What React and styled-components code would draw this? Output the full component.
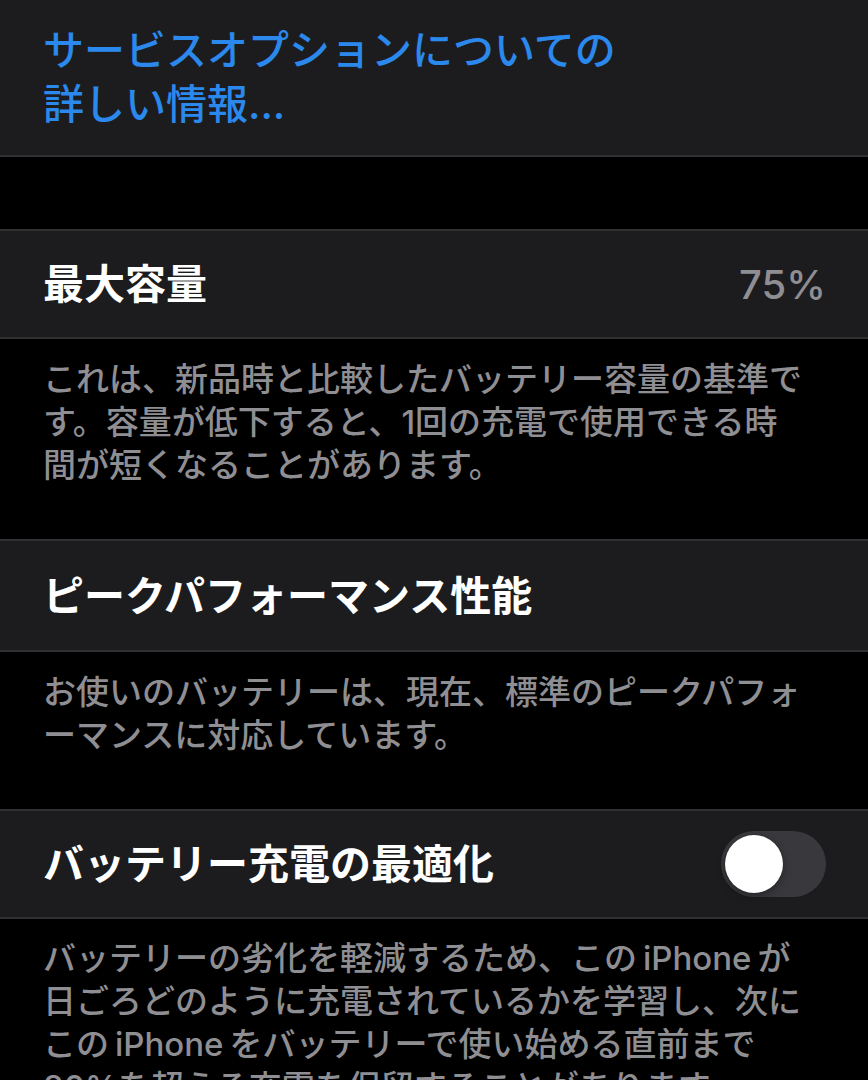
import React from "react";
import styled, { createGlobalStyle } from "styled-components";

const Global = createGlobalStyle`
  html, body {
    margin: 0;
    padding: 0;
    background: #000;
  }
  body {
    font-family: "Inter", "Noto Sans CJK JP", sans-serif;
    -webkit-font-smoothing: antialiased;
  }
`;

const Page = styled.div`
  width: 868px;
  height: 1080px;
  overflow: hidden;
  background: #000;
  display: flex;
  flex-direction: column;
  & > * {
    flex-shrink: 0;
  }
`;

const Cell = styled.div`
  background: #1c1c1e;
  border-top: ${(p) => (p.$noTop ? "none" : "2px solid #303032")};
  border-bottom: 2px solid #303032;
  min-height: ${(p) => p.$height || 108}px;
  box-sizing: border-box;
  padding: ${(p) => p.$padding || "0 42px 0 43px"};
  display: flex;
  align-items: center;
  justify-content: space-between;
`;

const LinkText = styled.div`
  color: #2b88ec;
  font-size: 41px;
  line-height: 54px;
  font-weight: 500;
`;

const Title = styled.div`
  color: #ffffff;
  font-size: 41px;
  font-weight: 600;
  line-height: 54px;
`;

const Value = styled.div`
  color: #8e8e93;
  font-size: 40px;
  font-weight: 500;
`;

const Gap = styled.div`
  height: ${(p) => p.$h}px;
`;

const Footer = styled.p`
  margin: 0;
  padding: ${(p) => p.$pt || 20}px 43px ${(p) => p.$pb || 51}px 43px;
  color: #8e8e93;
  font-size: 33px;
  line-height: 43px;
  font-weight: 500;
  white-space: nowrap;
`;

const Latin = styled.span`
  margin: 0 0.18em;
`;

const Switch = styled.div`
  width: 105px;
  height: 66px;
  border-radius: 33px;
  background: #39393d;
  position: relative;
  flex-shrink: 0;
`;

const Knob = styled.div`
  position: absolute;
  left: 4px;
  top: 4px;
  width: 58px;
  height: 58px;
  border-radius: 50%;
  background: #fff;
  box-shadow: 0 3px 8px rgba(0, 0, 0, 0.35), 0 0 0 1px rgba(0, 0, 0, 0.05);
`;

export default function App() {
  return (
    <>
      <Global />
      <Page>
        <Cell $noTop $height={157} $padding="23px 42px 24px 43px">
          <LinkText>
            サービスオプションについての
            <br />
            詳しい情報...
          </LinkText>
        </Cell>
        <Gap $h={72} />
        <Cell $height={110}>
          <Title>最大容量</Title>
          <Value>75%</Value>
        </Cell>
        <Footer $pt={19} $pb={52}>
          これは、新品時と比較したバッテリー容量の基準で
          <br />
          す。容量が低下すると、1回の充電で使用できる時
          <br />
          間が短くなることがあります。
        </Footer>
        <Cell $height={113}>
          <Title>ピークパフォーマンス性能</Title>
        </Cell>
        <Footer $pt={19} $pb={52}>
          お使いのバッテリーは、現在、標準のピークパフォ
          <br />
          ーマンスに対応しています。
        </Footer>
        <Cell $height={110}>
          <Title>バッテリー充電の最適化</Title>
          <Switch>
            <Knob />
          </Switch>
        </Cell>
        <Footer $pt={18}>
          バッテリーの劣化を軽減するため、この<Latin>iPhone</Latin>が
          <br />
          日ごろどのように充電されているかを学習し、次に
          <br />
          この<Latin>iPhone</Latin>をバッテリーで使い始める直前まで
          <br />
          80%を超える充電を保留することがあります。
        </Footer>
      </Page>
    </>
  );
}
